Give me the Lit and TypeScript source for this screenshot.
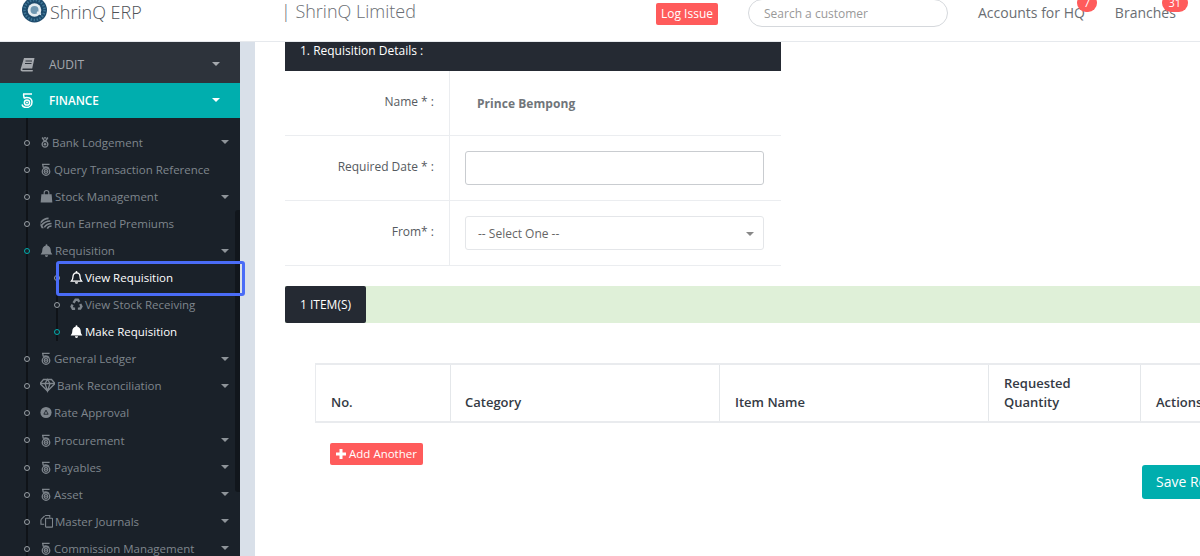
import { LitElement, html, css, svg } from "lit";
import { customElement } from "lit/decorators.js";

const coin = svg`<g fill="none" stroke="currentColor" stroke-width="1.600"><path d="M2.500 1h9.500M3.500 1.300l.5 3.700"/><path d="M4 4.800c2.500-1 6-.4 7.500 1.500"/><circle cx="7.500" cy="10" r="4.700"/><circle cx="7.500" cy="10" r="2.300"/></g><circle cx="7.500" cy="10" r="1" fill="currentColor"/>`;
const medal = svg`<g fill="none" stroke="currentColor" stroke-width="1.900"><path d="M3 .5l4 6M11 .5L7 6.500M5.500.5c1 1 2 1 3 0"/><circle cx="7" cy="10" r="4"/></g><circle cx="7" cy="10" r="1.800" fill="currentColor"/>`;
const bag = svg`<path fill="currentColor" d="M1.500 5h11l.8 9H.7z"/><path fill="none" stroke="currentColor" stroke-width="1.200" d="M4.500 6V3.500a2.500 2.500 0 0 1 5 0V6"/>`;
const wifi = svg`<g fill="none" stroke="currentColor" stroke-width="1.800"><path d="M1 6.500C3 3.500 6.500 1.500 10 1.500"/><path d="M2 9.500c2.500-3.500 6-5 10-5"/><path d="M5 12c2-3 5-4.500 8.500-4.500"/><path d="M8.500 13.500c1-2 3-3 5-3"/></g><path fill="currentColor" d="M.8 6.500L4.500 13l-2.500 0L.5 10z"/>`;
const bellSolid = svg`<path fill="currentColor" d="M7 .8a1 1 0 0 1 1 1v.5c2.200.5 3.500 2.300 3.500 4.500 0 3 1 3.900 1.800 4.900H.7c.8-1 1.800-1.900 1.800-4.900 0-2.200 1.300-4 3.500-4.500v-.5a1 1 0 0 1 1-1zM5.300 12.700h3.400a1.700 1.700 0 0 1-3.400 0z"/>`;
const bellLine = svg`<path fill="none" stroke="currentColor" stroke-width="1.400" d="M7 2.500c2.500 0 3.800 1.900 3.800 4.300 0 2.800.9 3.700 1.700 4.700H1.500c.8-1 1.700-1.900 1.700-4.700C3.200 4.400 4.500 2.500 7 2.500z"/><path fill="currentColor" d="M6 1.500a1 1 0 0 1 2 0V3H6zM5.300 12.500h3.400a1.700 1.700 0 0 1-3.400 0z"/>`;
const recycle = svg`<g fill="none" stroke="currentColor" stroke-width="2.600"><path d="M3.800 5.800L6 2.300h2.500l1.500 2.500"/><path d="M11 7l1.300 2.600-1.300 2.300H8.500"/><path d="M5.500 12H3L1.700 9.600 2.800 7.600"/></g>`;
const diamond = svg`<g fill="none" stroke="currentColor" stroke-width="1.300"><path d="M3.500 1.500h8L15 5.500 7.500 13 0 5.500z"/><path d="M0 5.500h15M5 5.500l2.500 7.500L10 5.500 7.500 1.500z"/></g>`;
const rate = svg`<circle cx="7" cy="7.500" r="6.500" fill="currentColor"/><path fill="none" stroke="#1a2129" stroke-width="1" d="M7 4.800L9.500 9.500h-5z"/>`;
const copy = svg`<g fill="none" stroke="currentColor" stroke-width="1.200"><path d="M5.500 1h5v2.500M1 5.500L5 1.500M1 5.500v5h3.500"/><rect x="6" y="4" width="7.500" height="9.500" rx=".5"/></g>`;
const book = svg`<path fill="currentColor" d="M4 1h10.500l-2.300 10.500H3.200c-.6 0-1 .4-1 .8s.4.700 1 .700h9.700l-.3 1.500H2.500C1.300 14.500.4 13.500.6 12.200z"/><path stroke="#2d333b" stroke-width="1" d="M5.500 4h6.500M5 6.500h6.500"/>`;
const finance = svg`<g fill="none" stroke="currentColor" stroke-width="1.500"><path d="M3 1h9M3.500 1.300l.7 4.200"/><path d="M4 5c3.500-1.500 8 0 8 4 0 3.500-2.700 5.500-5.500 5.500-2 0-4-1-4.500-3"/><circle cx="7" cy="9.500" r="2.600"/></g><circle cx="7" cy="9.500" r="1" fill="currentColor"/>`;

interface Item { label: string; icon: unknown; caret?: boolean; w: number; vb: number }
const before: Item[] = [
  { label: "Bank Lodgement", icon: medal, caret: true, w: 10, vb: 14 },
  { label: "Query Transaction Reference", icon: coin, w: 12, vb: 15 },
  { label: "Stock Management", icon: bag, caret: true, w: 13, vb: 14 },
  { label: "Run Earned Premiums", icon: wifi, w: 12, vb: 14 },
];
const after: Item[] = [
  { label: "General Ledger", icon: coin, caret: true, w: 12, vb: 15 },
  { label: "Bank Reconciliation", icon: diamond, caret: true, w: 15, vb: 15 },
  { label: "Rate Approval", icon: rate, w: 12, vb: 14 },
  { label: "Procurement", icon: coin, caret: true, w: 12, vb: 15 },
  { label: "Payables", icon: coin, caret: true, w: 12, vb: 15 },
  { label: "Asset", icon: coin, caret: true, w: 12, vb: 15 },
  { label: "Master Journals", icon: copy, caret: true, w: 13, vb: 14 },
  { label: "Commission Management", icon: coin, caret: true, w: 12, vb: 15 },
];

function ic(content: unknown, w: number, vb: number) {
  return html`<svg class="ic" width=${w} height="15" viewBox="0 0 ${vb} 15" preserveAspectRatio="xMinYMid meet">${content}</svg>`;
}

@customElement("app-root")
export class AppRoot extends LitElement {
  static styles = css`
    :host { display: block; width: 1200px; height: 556px; overflow: hidden; position: relative; background: #fff;
      font-family: "Open Sans", sans-serif; color: #555; }
    * { box-sizing: border-box; }
    .top { height: 42px; display: flex; align-items: flex-start; background: #fff; border-bottom: 1px solid #e6e9ed; position: relative; z-index: 2; overflow: hidden; }
    .brand { width: 281px; flex: none; display: flex; align-items: center; padding-left: 22px; gap: 3px; font-size: 18px; font-weight: 300; color: #4f5358; height: 23px; }
    .logo { flex: none; margin-top: -3px; }
    .company { width: 375px; flex: none; font-size: 18px; font-weight: 300; color: #6a6e73; line-height: 23px; }
    .log { flex: none; width: 62px; height: 22px; margin-top: 3px; background: #ff5b5b; color: #fff; border-radius: 2px; font-size: 12px; display: flex; align-items: center; justify-content: center; padding-bottom: 1px; }
    .search { flex: none; margin-left: 30px; width: 200px; height: 28px; margin-top: -1px; border: 1px solid #d5d8dc; border-radius: 14px; font-size: 12px; color: #999; padding: 0 15px; display: flex; align-items: center; }
    .nav { flex: none; font-size: 14px; color: #6a6e73; position: relative; line-height: 20px; margin-top: 3px; }
    .hq { margin-left: 30px; }
    .br { margin-left: 30px; }
    .badge { position: absolute; height: 18px; top: -9px; border-radius: 9px; background: #ff5b5b; color: #fff; font-size: 11px; display: flex; align-items: center; justify-content: center; line-height: 14px; }
    .hq .badge { left: 99px; width: 20px; }
    .br .badge { left: 47px; width: 26px; }

    .body { display: flex; height: 514px; overflow: hidden; }
    .side { width: 240px; flex: none; background: #1a2129; position: relative; z-index: 1; }
    .gutter { width: 15px; flex: none; background: #d9e0e9; }
    .main { flex: 1; min-width: 0; padding: 0 0 0 30px; overflow: hidden; }

    .top-item { display: flex; align-items: center; padding: 0 20px; font-size: 12px; }
    .top-item .lbl { margin-left: 14px; flex: 1; }
    .audit { height: 41px; background: #2d333b; color: #a5a9ae; padding-top: 3px; }
    .finance { height: 35px; background: #00aeae; color: #fff; font-size: 11.700px; font-weight: 600; padding-bottom: 1px; }
    .finance .lbl { margin-left: 15px; }
    .caret { width: 0; height: 0; border-left: 4px solid transparent; border-right: 4px solid transparent; border-top: 4px solid currentColor; flex: none; }

    .tree { position: relative; padding-top: 10.970px; }
    .line { position: absolute; left: 26px; top: 0; bottom: 0; width: 2px; background: #0f1318; }
    .line2 { position: absolute; left: 56px; top: 145px; height: 78px; width: 2px; background: #0f1318; }
    .scroll { position: absolute; left: 235px; top: 92px; width: 5px; height: 282px; background: #11161c; border-radius: 3px 0 0 3px; }
    .row { height: 27.050px; display: flex; align-items: center; position: relative; padding: 0 10px 0 40px; color: #7f868d; font-size: 11.500px; }
    .row.sub { padding-left: 70px; }
    .row::before { content: ""; box-sizing: border-box; position: absolute; left: 24px; top: 11px; width: 6px; height: 6px; border: 1px solid #9aa0a5; border-radius: 50%; background: #1a2129; }
    .row.sub::before { left: 54px; }
    .row.on::before { border-color: #00aeae; }
    .row .ic { flex: none; margin-right: 2px; }
    .row .t { flex: 1; white-space: nowrap; }
    .row .caret { margin-right: 1px; color: #8e9499; }
    .row.white { color: #fff; }

    .focus { position: absolute; left: 56px; top: 219px; width: 189px; height: 35px; border: 3px solid #4a6cf7; border-radius: 3px; }

    .card { width: 496px; }
    .card-h { height: 29px; background: #252a33; color: #fff; font-size: 12px; padding: 0 15px; line-height: 17px; }
    .f { display: flex; height: 65px; border-bottom: 1px solid #ebedf0; }
    .f label { width: 165px; flex: none; border-right: 1px solid #ebedf0; text-align: right; padding: 22px 15px 0 0; font-size: 12px; color: #555a60; line-height: 17px; }
    .f .v { flex: 1; padding: 15px 17px 0 15px; }
    .name { font-size: 12px; font-weight: 700; color: #70757a; padding: 9px 0 0 12px; line-height: 17px; letter-spacing: .05px; }
    .inp { height: 34px; border: 1px solid #c9ccd0; border-radius: 3px; background: #fff; }
    .sel { height: 34px; border: 1px solid #e4e6e9; border-radius: 3px; font-size: 12px; color: #666; display: flex; align-items: center; justify-content: space-between; padding: 1px 9px 0 12px; }
    .sel .caret { color: #888; }

    .items { margin-top: 20px; height: 37px; background: #dff0d8; display: flex; }
    .tab { width: 81px; height: 37px; background: #252a33; color: #fff; font-size: 12px; border-radius: 2px; display: flex; align-items: center; padding: 0 0 0 15px; }

    .tbl { margin: 40px 0 0 30px; width: 1000px; display: grid; grid-template-columns: 135px 269px 269px 152px 175px; border-top: 2px solid #e9ebee; border-left: 1px solid #e9ebee; border-bottom: 2px solid #e9ebee; height: 60px; }
    .th { border-right: 1px solid #e4e7ea; font-size: 13px; font-weight: 600; color: #343a44; padding: 0 15px 9px 15px; display: flex; align-items: flex-end; line-height: 19px; }
    .th.cat { padding-left: 14px; }
    .add-wrap { display: flex; padding: 20px 0 0 45px; }
    .add { width: 93px; height: 22px; background: #ff5b5b; color: #fff; border-radius: 2px; font-size: 11.500px; display: flex; align-items: center; justify-content: center; gap: 3px; padding-bottom: 1px; }
    .save-wrap { width: 1100px; display: flex; justify-content: flex-end; padding-right: 93px; }
    .save { width: 150px; height: 34px; background: #00aeae; color: #fff; border-radius: 3px; font-size: 14px; display: flex; align-items: center; padding: 0 0 2px 14px; white-space: nowrap; }
  `;

  private row(i: Item, extra = "") {
    return html`<div class="row ${extra}">${ic(i.icon, i.w, i.vb)}<span class="t">${i.label}</span>${i.caret ? html`<span class="caret"></span>` : ""}</div>`;
  }

  render() {
    return html`
      <div class="top">
        <div class="brand">
          <svg class="logo" width="25" height="26" viewBox="0 0 25 26">
            <circle cx="12.500" cy="13" r="12.500" fill="#1d4a6b"/>
            <circle cx="12.500" cy="13" r="10" fill="none" stroke="#3f7696" stroke-width="2.500" stroke-dasharray="1.500 1.500"/>
            <circle cx="12.500" cy="13" r="6.800" fill="#e4ecf1"/>
            <circle cx="12.500" cy="13" r="4" fill="#6f97b1"/>
            <path d="M15 15l4 2.500" stroke="#e4ecf1" stroke-width="1.500"/>
          </svg>
          <span>ShrinQ ERP</span>
        </div>
        <div class="company">| ShrinQ Limited</div>
        <div class="log">Log Issue</div>
        <div class="search">Search a customer</div>
        <div class="nav hq">Accounts for HQ<span class="badge">7</span></div>
        <div class="nav br">Branches<span class="badge">31</span></div>
      </div>
      <div class="body">
        <div class="side">
          <div class="top-item audit">${ic(book, 15, 15)}<span class="lbl">AUDIT</span><span class="caret"></span></div>
          <div class="top-item finance">${ic(finance, 14, 14)}<span class="lbl">FINANCE</span><span class="caret"></span></div>
          <div class="tree">
            <div class="line"></div>
            <div class="line2"></div>
            <div class="scroll"></div>
            ${before.map((i) => this.row(i))}
            ${this.row({ label: "Requisition", icon: bellSolid, caret: true, w: 13, vb: 14 }, "on")}
            ${this.row({ label: "View Requisition", icon: bellLine, w: 13, vb: 14 }, "sub white")}
            ${this.row({ label: "View Stock Receiving", icon: recycle, w: 13, vb: 14 }, "sub")}
            ${this.row({ label: "Make Requisition", icon: bellSolid, w: 13, vb: 14 }, "sub white on")}
            ${after.map((i) => this.row(i))}
          </div>
          <div class="focus"></div>
        </div>
        <div class="gutter"></div>
        <div class="main">
          <div class="card">
            <div class="card-h">1. Requisition Details :</div>
            <div class="f"><label>Name * :</label><div class="v"><div class="name">Prince Bempong</div></div></div>
            <div class="f"><label>Required Date * :</label><div class="v"><div class="inp"></div></div></div>
            <div class="f"><label>From* :</label><div class="v"><div class="sel"><span>-- Select One --</span><span class="caret"></span></div></div></div>
          </div>
          <div class="items"><div class="tab">1 ITEM(S)</div></div>
          <div class="tbl">
            <div class="th">No.</div><div class="th cat">Category</div><div class="th">Item Name</div><div class="th">Requested<br />Quantity</div><div class="th">Actions</div>
          </div>
          <div class="add-wrap"><div class="add"><svg width="10" height="10" viewBox="0 0 10 10"><path fill="#fff" d="M3.500 0h3v3.500H10v3H6.500V10h-3V6.500H0v-3h3.500z"/></svg>Add Another</div></div>
          <div class="save-wrap"><div class="save">Save Requisition</div></div>
        </div>
      </div>
    `;
  }
}
